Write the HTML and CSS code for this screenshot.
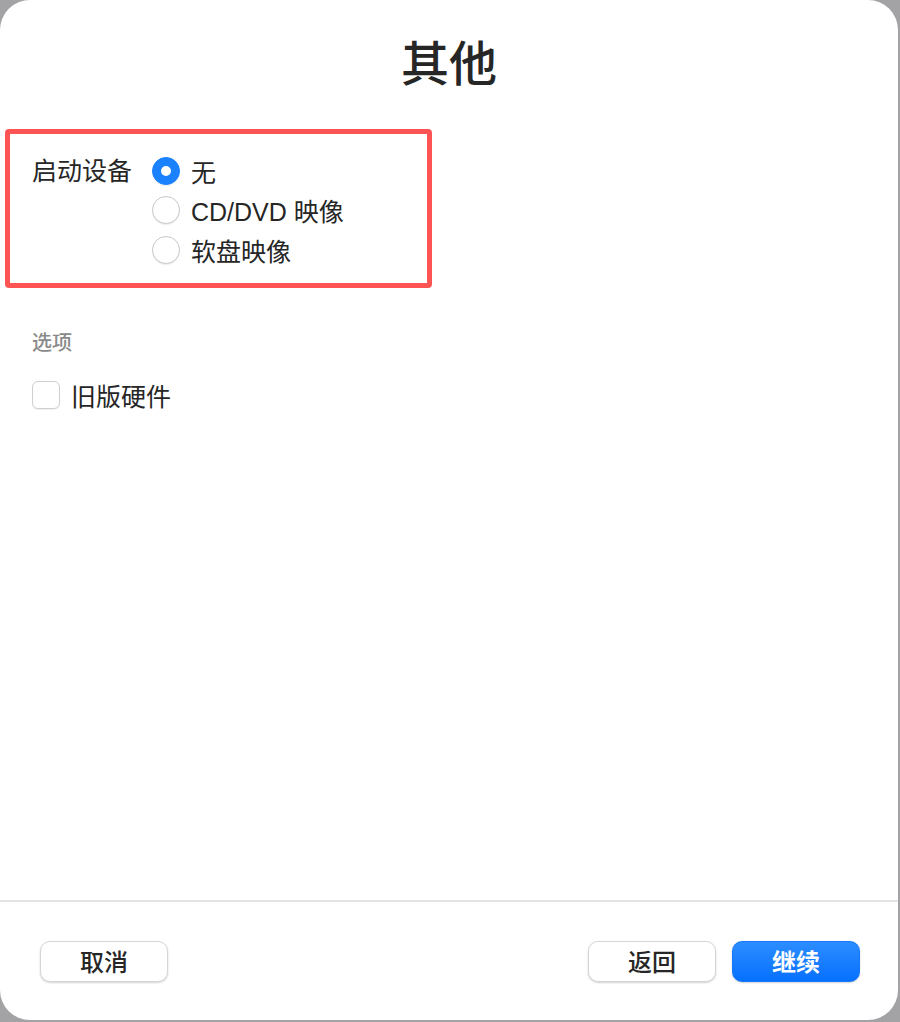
FILE: index.html
```html
<!DOCTYPE html>
<html lang="zh-CN">
<head>
    <meta charset="UTF-8">
    <meta name="viewport" content="width=device-width, initial-scale=1.0">
    <title>其他</title>
    <link rel="stylesheet" href="styles.css">
</head>
<body>
    <div class="sheet">
        <h1 class="title">其他</h1>

        <div class="boot-box">
            <div class="field-label">启动设备</div>
            <div class="radio-group">
                <label class="radio-row"><span class="radio checked"></span>无</label>
                <label class="radio-row"><span class="radio"></span>CD/DVD 映像</label>
                <label class="radio-row"><span class="radio"></span>软盘映像</label>
            </div>
        </div>

        <div class="options">
            <h2 class="section-title">选项</h2>
            <label class="check-row"><span class="checkbox"></span>旧版硬件</label>
        </div>

        <footer class="footer">
            <button class="btn">取消</button>
            <div class="footer-right">
                <button class="btn">返回</button>
                <button class="btn primary">继续</button>
            </div>
        </footer>
    </div>
</body>
</html>
```

FILE: styles.css
```css
* {
    box-sizing: border-box;
}
body {
    margin: 0;
    padding: 0;
    background-color: #a3a2a4;
    font-family: "Liberation Sans", "Noto Sans CJK SC", sans-serif;
    color: #262626;
}
.sheet {
    width: 898px;
    height: 1020px;
    background-color: #ffffff;
    border-radius: 30px;
    display: flex;
    flex-direction: column;
}
.title {
    margin: 0;
    padding-top: 34px;
    font-size: 48px;
    line-height: 62px;
    font-weight: 500;
    text-align: center;
    color: #262626;
}
.boot-box {
    margin: 33px 0 0 5px;
    width: 427px;
    border: 5px solid #fe5453;
    border-radius: 4px;
    padding: 17px 0 13px 22px;
    display: flex;
    align-items: flex-start;
    gap: 20px;
}
.field-label {
    font-size: 25px;
    line-height: 40px;
}
.radio-group {
    display: flex;
    flex-direction: column;
}
.radio-row {
    display: flex;
    align-items: center;
    gap: 11px;
    font-size: 25px;
    height: 39.5px;
}
.radio {
    width: 28px;
    height: 28px;
    border-radius: 50%;
    border: 1px solid #c9c9c9;
    background: #ffffff;
    box-shadow: 0 1px 1px rgba(0, 0, 0, 0.08);
    position: relative;
}
.radio.checked {
    border-color: #1a82ff;
    background: #1a82ff;
}
.radio.checked::after {
    content: "";
    position: absolute;
    left: 8px;
    top: 8px;
    width: 10px;
    height: 10px;
    border-radius: 50%;
    background: #ffffff;
}
.options {
    padding: 0 32px;
}
.section-title {
    margin: 41px 0 0;
    font-size: 20px;
    line-height: 28px;
    font-weight: 500;
    color: #8a8a8a;
}
.check-row {
    display: flex;
    align-items: center;
    gap: 11px;
    margin-top: 23px;
    font-size: 25px;
    height: 30px;
}
.checkbox {
    width: 28px;
    height: 28px;
    border: 1px solid #cfcfcf;
    border-radius: 6px;
    background: #ffffff;
    box-shadow: 0 1px 1px rgba(0, 0, 0, 0.06);
}
.footer {
    margin-top: auto;
    border-top: 2px solid #e4e4e4;
    padding: 39px 38px 38px 40px;
    display: flex;
    justify-content: space-between;
    align-items: center;
}
.footer-right {
    display: flex;
    gap: 16px;
}
.btn {
    width: 128px;
    height: 41px;
    border: 1px solid #d6d6d6;
    border-radius: 10px;
    background: #ffffff;
    box-shadow: 0 1px 2px rgba(0, 0, 0, 0.18);
    font-family: "Noto Sans CJK SC", "Noto Sans", sans-serif;
    font-size: 24px;
    font-weight: 500;
    color: #262626;
    padding: 0 0 3px;
}
.btn.primary {
    border-color: #1378ff;
    background: linear-gradient(#2d8dff, #0670ff);
    color: #ffffff;
    font-weight: 700;
}
```
